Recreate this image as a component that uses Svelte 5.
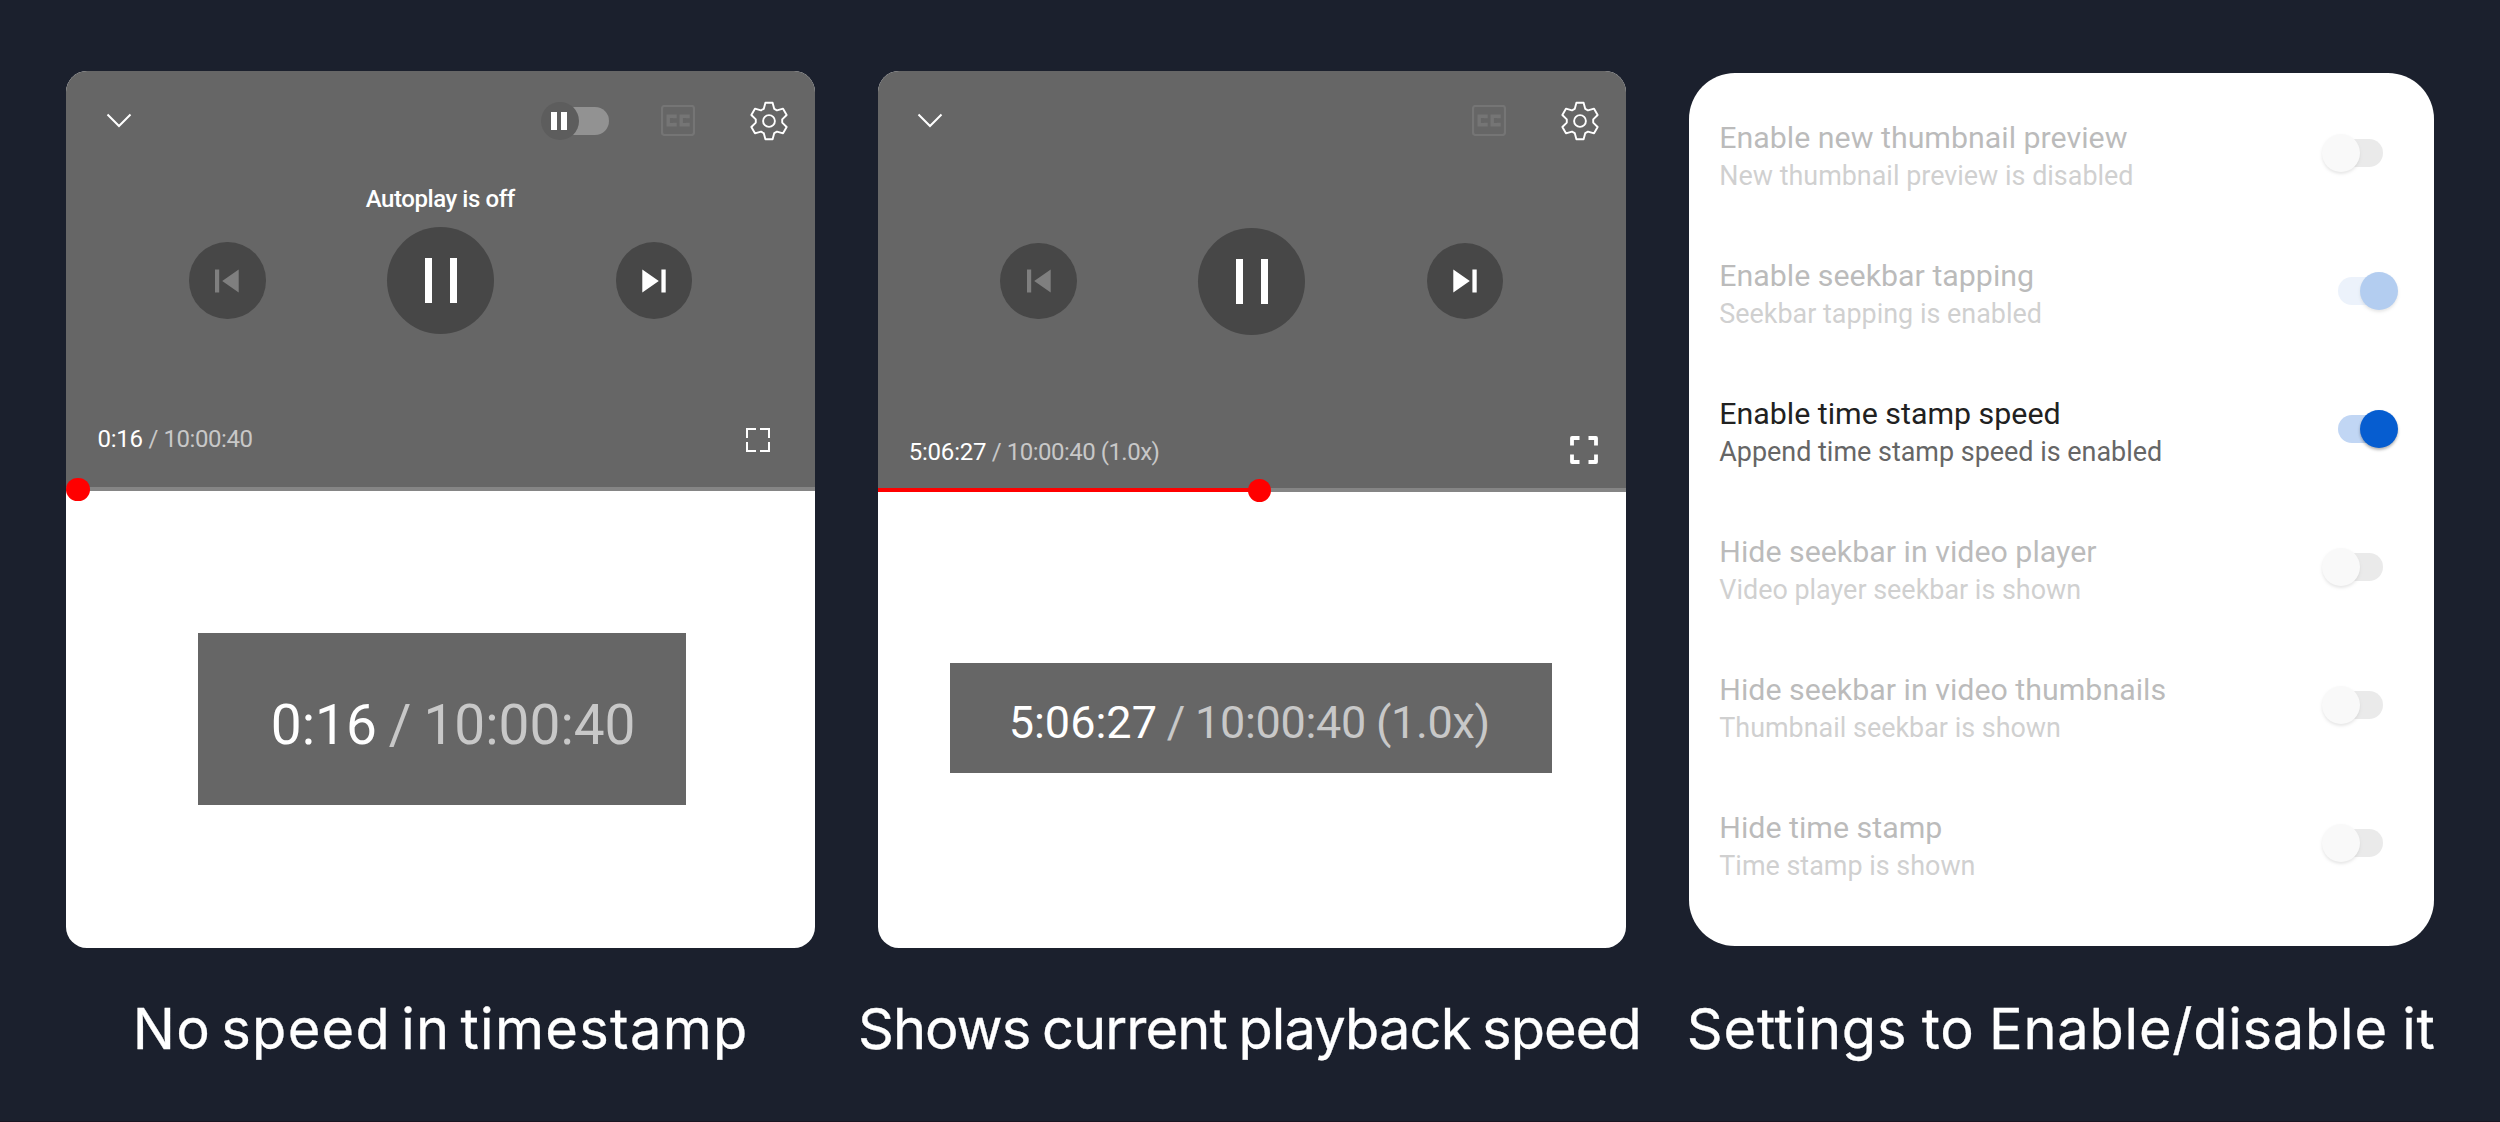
<script>
  const players = [
    { id: 'plain', autoplay: true, now: '0:16', rest: ' / 10:00:40', caption: 'No speed in timestamp' },
    { id: 'speed', autoplay: false, now: '5:06:27', rest: ' / 10:00:40 (1.0x)', caption: 'Shows current playback speed' }
  ];

  const settings = [
    { title: 'Enable new thumbnail preview', note: 'New thumbnail preview is disabled', on: false },
    { title: 'Enable seekbar tapping', note: 'Seekbar tapping is enabled', on: true },
    { title: 'Enable time stamp speed', note: 'Append time stamp speed is enabled', on: true, active: true },
    { title: 'Hide seekbar in video player', note: 'Video player seekbar is shown', on: false },
    { title: 'Hide seekbar in video thumbnails', note: 'Thumbnail seekbar is shown', on: false },
    { title: 'Hide time stamp', note: 'Time stamp is shown', on: false }
  ];
</script>

<main class="board">
  {#each players as p}
    <section class="column {p.id}">
      <div class="card">
        <div class="player">
          <div class="topbar">
            <svg class="chevron" viewBox="0 0 26 16"><path d="M1.5 1.5 13 13 24.5 1.5" /></svg>
            <div class="tools">
              {#if p.autoplay}
                <div class="autoplay"><span class="knob"><i></i><i></i></span></div>
              {/if}
              <svg class="cc" viewBox="0 0 34 31">
                <rect x="1" y="1" width="32" height="29" rx="2.5" />
                <path d="M14 13.2V11.2H7.2V19.8H14V17.8M27 13.2V11.2H20.2V19.8H27V17.8" />
              </svg>
              <svg class="gear" viewBox="-20 -20 40 40">
                <path d="M-3.6-18.3H3.6L5.2-12.2Q6.7-11.6 8-10.6L14.05-12.3 17.65-6 13.2-1.6V1.6L17.65 6 14.05 12.3 8 10.6Q6.7 11.6 5.2 12.2L3.6 18.3H-3.6L-5.2 12.2Q-6.7 11.6-8 10.6L-14.05 12.3-17.65 6-13.2 1.6V-1.6L-17.65-6-14.05-12.3-8-10.6Q-6.7-11.6-5.2-12.2Z" />
                <circle r="5.9" />
              </svg>
            </div>
          </div>
          <div class="message">{#if p.autoplay}Autoplay is off{/if}</div>
          <div class="controls">
            <span class="round dim"><svg viewBox="0 0 24 24"><path d="M0 .5H4.2V23.5H0ZM23.7.5V23.5L7.2 12Z" /></svg></span>
            <span class="round big"><i></i><i></i></span>
            <span class="round"><svg viewBox="0 0 24 24"><path d="M.3.5V23.5L16.8 12ZM19.4.5H23.7V23.5H19.4Z" /></svg></span>
          </div>
          <div class="bottombar">
            <span class="time"><b>{p.now}</b>{p.rest}</span>
            {#if p.id === 'plain'}
              <svg class="full" viewBox="0 0 24 24"><path d="M1 10V1H10M14 1H23V10M23 14V23H14M10 23H1V14" /></svg>
            {:else}
              <svg class="full" viewBox="0 0 28 28"><path d="M2 9.5V2H9.5M18.5 2H26V9.5M26 18.5V26H18.5M9.5 26H2V18.5" /></svg>
            {/if}
          </div>
        </div>
        <div class="seekbar"><span class="played"></span><span class="dot"></span></div>
        <div class="closeup"><span><b>{p.now}</b>{p.rest}</span></div>
      </div>
      <h2>{p.caption}</h2>
    </section>
  {/each}

  <section class="column prefs">
    <div class="card">
      {#each settings as s}
        <div class="row" class:active={s.active}>
          <div class="label">
            <strong>{s.title}</strong>
            <small>{s.note}</small>
          </div>
          <span class="switch" class:on={s.on}></span>
        </div>
      {/each}
    </div>
    <h2>Settings to Enable/disable it</h2>
  </section>
</main>

<style>
  :global(body) { margin: 0; background: #1b202d; }
  .board {
    box-sizing: border-box;
    display: grid;
    grid-template-columns: 748.7px 748.5px 745px;
    column-gap: 62.6px;
    width: 2500px;
    height: 1122px;
    padding: 71px 0 0 66.4px;
    overflow: hidden;
    border-bottom: 1px solid #1a1522;
    font-family: Roboto, sans-serif;
    color: #fff;
  }
  .column { display: flex; flex-direction: column; min-width: 0; }
  .card { height: 877px; border-radius: 21px; background: #fff; flex: none; }
  svg { display: block; fill: none; flex: none; }
  b { font-weight: 400; color: #fff; }

  .player {
    display: flex;
    flex-direction: column;
    height: 416px;
    border-radius: 21px 21px 0 0;
    background: #666;
  }
  .topbar {
    display: flex;
    align-items: center;
    justify-content: space-between;
    height: 99.5px;
    padding: 0 26px 0 39.5px;
  }
  .chevron { width: 26px; height: 16px; stroke: #fff; stroke-width: 2; }
  .tools { display: flex; align-items: center; }
  .autoplay {
    box-sizing: border-box;
    width: 58px;
    height: 27.5px;
    margin-right: 52px;
    border-radius: 14px;
    background: #929292;
    display: flex;
    align-items: center;
  }
  .knob {
    box-sizing: border-box;
    display: flex;
    align-items: center;
    justify-content: center;
    gap: 4px;
    flex: none;
    width: 38.5px;
    height: 38.5px;
    margin-left: -10.5px;
    padding-right: 1.5px;
    border-radius: 50%;
    background: #5d5d5d;
  }
  .knob i { width: 6px; height: 18.5px; background: #fff; }
  .cc { width: 34px; height: 31px; margin-right: 54px; stroke: #757575; stroke-width: 2.2; }
  .cc path { stroke-width: 3.4; }
  .gear { width: 40px; height: 40px; stroke: #fff; stroke-width: 1.9; stroke-linejoin: round; }

  .message {
    height: 56.5px;
    padding-right: 1px;
    text-align: center;
    font-size: 24px;
    line-height: 56px;
    font-weight: 500;
    letter-spacing: -0.43px;
  }
  .controls { display: flex; align-items: center; justify-content: center; gap: 121.5px; height: 107px; }
  .speed .controls { padding-top: 0.7px; }
  .round {
    display: flex;
    align-items: center;
    justify-content: center;
    width: 76.5px;
    height: 76.5px;
    border-radius: 50%;
    background: #474747;
  }
  .round svg { width: 24px; height: 24px; fill: #fff; }
  .round.dim svg { fill: #7f7f7f; }
  .big { width: 107px; height: 107px; gap: 18px; }
  .big i { width: 7px; height: 45px; background: #fff; }

  .bottombar { display: flex; align-items: flex-start; justify-content: space-between; padding: 94px 45px 0 31px; }
  .speed .bottombar { padding: 101.5px 28.5px 0 31px; }
  .time { font-size: 24px; line-height: 24px; color: #c8c8c8; white-space: pre; margin-top: -1px; letter-spacing: -0.42px; }
  .time b { letter-spacing: -0.2px; }
  .speed .time { margin-top: 4px; letter-spacing: -0.5px; }
  .full { width: 24px; height: 24px; stroke: #fff; stroke-width: 2; }
  .speed .full { width: 28px; height: 28px; stroke-width: 3.8; stroke-linejoin: round; }

  .seekbar { position: relative; height: 4px; background: #858585; }
  .speed .player { height: 417px; }
  .played { display: block; width: 0; height: 4px; background: #f00; }
  .speed .played { width: 381px; }
  .dot {
    position: absolute;
    left: 0;
    top: -9.5px;
    width: 23.5px;
    height: 23.5px;
    border-radius: 50%;
    background: #f00;
  }
  .speed .dot { left: 370px; }

  .closeup {
    box-sizing: border-box;
    display: flex;
    align-items: center;
    width: 488.5px;
    height: 171.5px;
    margin: 142px 0 0 131.4px;
    padding: 12px 0 0 73px;
    background: #666;
    color: #c8c8c8;
    font-size: 55px;
    word-spacing: -1.7px;
    white-space: pre;
  }
  .speed .closeup {
    width: 602.5px;
    height: 110px;
    margin: 171px 0 0 72px;
    padding: 8px 0 0 59px;
    font-size: 45px;
    letter-spacing: -0.3px;
    word-spacing: -1px;
  }
  .closeup b { letter-spacing: 0; }

  h2 {
    display: flex;
    justify-content: center;
    margin: 43px 0 0;
    font: 400 56px/76px Inter, sans-serif;
    letter-spacing: 1.3px;
    word-spacing: -7px;
    white-space: nowrap;
    -webkit-text-stroke: 0.3px #fff;
  }
  .speed h2 { margin-left: -5px; letter-spacing: -0.9px; word-spacing: -3.3px; }
  .prefs h2 { letter-spacing: 0.75px; word-spacing: -2px; }

  .prefs .card {
    box-sizing: border-box;
    height: 873px;
    margin: 2px 0;
    padding: 11px 35px 0 30.5px;
    border-radius: 46px;
  }
  .row { display: flex; align-items: center; justify-content: space-between; height: 138px; opacity: 0.3; color: #212121; }
  .row.active { opacity: 1; }
  .label { display: flex; flex-direction: column; padding-top: 7px; white-space: nowrap; }
  strong { font-size: 30.35px; line-height: 38px; font-weight: 400; }
  small { font-size: 26.93px; line-height: 38px; color: #666; }
  .switch {
    display: flex;
    align-items: center;
    width: 45px;
    height: 28px;
    margin-right: 16px;
    border-radius: 14px;
    background: #bbb;
  }
  .switch::before {
    content: '';
    width: 38px;
    height: 38px;
    flex: none;
    margin-left: -16px;
    border-radius: 50%;
    background: #eee;
    box-shadow: 0 2px 3px rgb(0 0 0 / 0.3);
  }
  .switch.on { background: #c1d6f4; }
  .switch.on::before { margin-left: 22px; background: #065dd0; }
</style>
